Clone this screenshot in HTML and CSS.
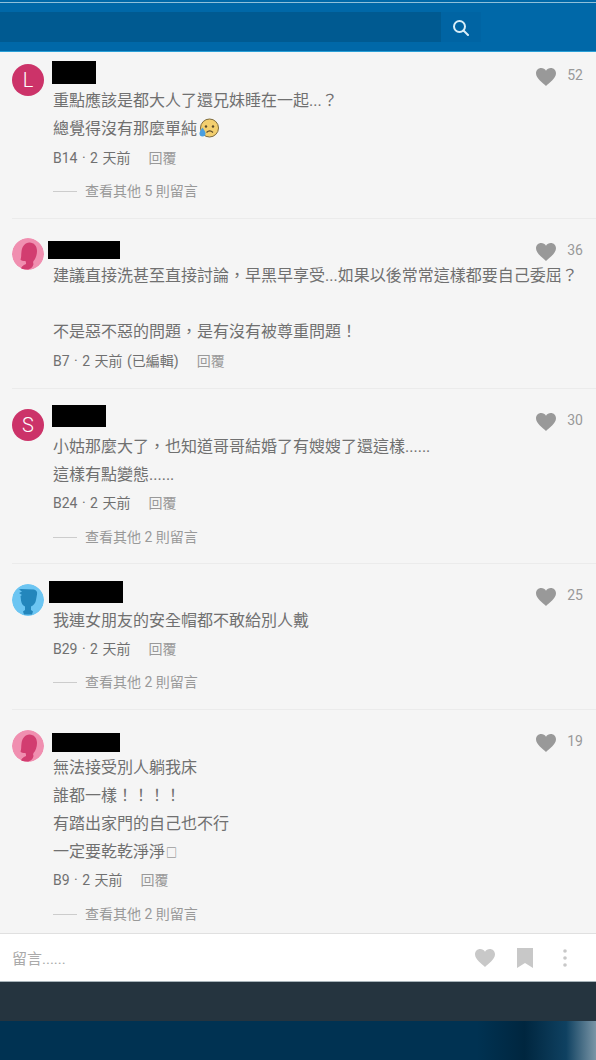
FILE: index.html
```html
<!DOCTYPE html>
<html lang="zh-Hant">
<head>
    <meta charset="UTF-8">
    <meta name="viewport" content="width=device-width, initial-scale=1.0">
    <title>留言</title>
    <link rel="stylesheet" href="styles.css">
</head>
<body>
    <svg class="defs" width="0" height="0">
        <symbol id="heart" viewBox="0 0 20 18">
            <path d="M10 18C7 15 0 10.500 0 5.300 0 2.200 2.300 0 5.200 0 7.200 0 9 1 10 2.700 11 1 12.800 0 14.800 0 17.700 0 20 2.200 20 5.300 20 10.500 13 15 10 18Z"/>
        </symbol>
        <symbol id="girl" viewBox="0 0 32 32">
            <circle cx="16" cy="16" r="16" fill="#f08fb0"/>
            <path fill="#d23d70" d="M9 31c0-2 2-4 5-5 0-1 0-2-.5-3-2.500 0-4.500-.5-5-1.500 1-2 .5-5 1-8 .5-5 3.500-9 8-9 4.500 0 7.500 3.500 7.500 8.500 0 4-1.500 8-3.500 10-.5 1-.5 2 0 3-.5 3-3 5.500-6.500 5.500-2.500 0-4.500 0-6-.5Z"/>
        </symbol>
        <symbol id="boy" viewBox="0 0 32 32">
            <circle cx="16" cy="16" r="16" fill="#6cc5f2"/>
            <path fill="#2386bc" d="M9 5l13 .5c2.500.5 3.500 2.500 3 5l-1 5.500c-.5 3-2.500 5.500-5 6.500v3.500l2 1.500-1 3h-8l-1-3 2-1.500v-3.500c-2.500-1-3.500-3-4-6l-.5-4.500 1.500-1-3-2 3-1.500-3-2Z"/>
        </symbol>
    </svg>

    <header class="topbar">
        <div class="search-box">
            <div class="search-btn">
                <svg width="18" height="18" viewBox="0 0 18 18" fill="none" stroke="#d8eef8" stroke-width="2">
                    <circle cx="7.500" cy="8.500" r="5.500"/>
                    <path d="M11.500 12.500l4.500 4.500" stroke-linecap="round"/>
                </svg>
            </div>
        </div>
    </header>

    <main class="comments">
        <section class="comment comment-first">
            <div class="avatar avatar-letter">L</div>
            <div class="comment-body">
                <div class="comment-head">
                    <div class="name name-1"></div>
                    <div class="likes"><svg class="like-icon"><use href="#heart"/></svg><span>52</span></div>
                </div>
                <p class="line">重點應該是都大人了還兄妹睡在一起...？</p>
                <p class="line">總覺得沒有那麼單純<svg class="emoji" viewBox="0 0 20 20">
                    <circle cx="10.500" cy="10" r="9" fill="#f3cf6f" stroke="#7d6a3a" stroke-width="1"/>
                    <circle cx="7" cy="8.500" r="1.200" fill="#5b4a2a"/>
                    <circle cx="14" cy="8.500" r="1.200" fill="#5b4a2a"/>
                    <path d="M7.500 14.500c2-2 4.500-2 6.500 0" fill="none" stroke="#5b4a2a" stroke-width="1.200"/>
                    <path d="M3.500 9.500c-2 3-3 4.500-3 6a3 3 0 0 0 6 0c0-1.500-1-3-3-6Z" fill="#4a9fe0"/>
                </svg></p>
                <div class="meta"><span>B14 · 2 天前</span><a class="reply">回覆</a></div>
                <div class="more"><i class="more-rule"></i>查看其他 5 則留言</div>
            </div>
        </section>

        <section class="comment">
            <svg class="avatar avatar-up"><use href="#girl"/></svg>
            <div class="comment-body">
                <div class="comment-head">
                    <div class="name name-2"></div>
                    <div class="likes"><svg class="like-icon"><use href="#heart"/></svg><span>36</span></div>
                </div>
                <p class="line">建議直接洗甚至直接討論，早黑早享受...如果以後常常這樣都要自己委屈？</p>
                <p class="line">&nbsp;</p>
                <p class="line">不是惡不惡的問題，是有沒有被尊重問題！</p>
                <div class="meta"><span>B7 · 2 天前 (已編輯)</span><a class="reply">回覆</a></div>
            </div>
        </section>

        <section class="comment comment-tall">
            <div class="avatar avatar-letter">S</div>
            <div class="comment-body">
                <div class="comment-head">
                    <div class="name name-3"></div>
                    <div class="likes"><svg class="like-icon"><use href="#heart"/></svg><span>30</span></div>
                </div>
                <p class="line">小姑那麼大了，也知道哥哥結婚了有嫂嫂了還這樣......</p>
                <p class="line">這樣有點變態......</p>
                <div class="meta"><span>B24 · 2 天前</span><a class="reply">回覆</a></div>
                <div class="more"><i class="more-rule"></i>查看其他 2 則留言</div>
            </div>
        </section>

        <section class="comment comment-tight">
            <svg class="avatar"><use href="#boy"/></svg>
            <div class="comment-body">
                <div class="comment-head">
                    <div class="name name-4"></div>
                    <div class="likes"><svg class="like-icon"><use href="#heart"/></svg><span>25</span></div>
                </div>
                <p class="line">我連女朋友的安全帽都不敢給別人戴</p>
                <div class="meta"><span>B29 · 2 天前</span><a class="reply">回覆</a></div>
                <div class="more"><i class="more-rule"></i>查看其他 2 則留言</div>
            </div>
        </section>

        <section class="comment comment-tall comment-last">
            <svg class="avatar"><use href="#girl"/></svg>
            <div class="comment-body">
                <div class="comment-head">
                    <div class="name name-5"></div>
                    <div class="likes"><svg class="like-icon"><use href="#heart"/></svg><span>19</span></div>
                </div>
                <p class="line">無法接受別人躺我床</p>
                <p class="line">誰都一樣！！！！</p>
                <p class="line">有踏出家門的自己也不行</p>
                <p class="line">一定要乾乾淨淨<span class="tofu">□</span></p>
                <div class="meta"><span>B9 · 2 天前</span><a class="reply">回覆</a></div>
                <div class="more"><i class="more-rule"></i>查看其他 2 則留言</div>
            </div>
        </section>
    </main>

    <div class="reply-bar">
        <span class="placeholder">留言......</span>
        <div class="reply-actions">
            <svg class="action-heart"><use href="#heart"/></svg>
            <svg class="action-mark" viewBox="0 0 16 20"><path d="M0 0h16v20l-8-5-8 5Z"/></svg>
            <svg class="action-dots" viewBox="0 0 4 18"><circle cx="2" cy="2" r="1.800"/><circle cx="2" cy="9" r="1.800"/><circle cx="2" cy="16" r="1.800"/></svg>
        </div>
    </div>
    <div class="footer-dark"></div>
    <div class="footer-navy"></div>
</body>
</html>
```

FILE: styles.css
```css
html, body {
    margin: 0;
    height: 1060px;
    overflow: hidden;
}
body {
    font-family: Roboto, "Noto Sans CJK TC", sans-serif;
    background-color: #f5f5f5;
    color: #707070;
}
.defs {
    display: block;
    height: 0;
}
.topbar {
    height: 52px;
    padding-top: 12px;
    box-sizing: border-box;
    background: linear-gradient(to bottom, #0068a8 2px, #8fc0da 2px, #8fc0da 3px, #0068a8 3px);
    border-bottom: 1px solid #2a9fd6;
}
.search-box {
    width: 481px;
    height: 30px;
    background-color: #005a91;
    display: flex;
    justify-content: flex-end;
}
.search-btn {
    width: 40px;
    height: 30px;
    background-color: #0064a3;
    display: flex;
    align-items: center;
    justify-content: center;
}
.comment {
    display: flex;
    margin-left: 12px;
    padding: 20px 13px 13px 0;
    border-bottom: 1px solid #ebebeb;
}
.comment-first {
    padding-top: 12px;
}
.comment-last {
    border-bottom: none;
}
.avatar {
    flex: none;
    width: 32px;
    height: 32px;
    border-radius: 50%;
}
.avatar-up {
    margin-top: -1px;
}
.avatar-letter {
    background-color: #cc3369;
    color: #fff;
    font-size: 20px;
    font-weight: 300;
    line-height: 32px;
    text-align: center;
}
.comment-body {
    flex: 1;
    margin-left: 9px;
    min-width: 0;
}
.comment-head {
    display: flex;
    justify-content: space-between;
    height: 23px;
}
.comment-tall .comment-head {
    height: 24px;
}
.name {
    background-color: #000;
    flex: none;
}
.name-1 {
    width: 44px;
    height: 23px;
    margin: -3px 0 0 -1px;
}
.name-2 {
    width: 72px;
    height: 18px;
    margin: 2px 0 0 -5px;
}
.name-3 {
    width: 54px;
    height: 22px;
    margin: -4px 0 0 -1px;
}
.name-4 {
    width: 74px;
    height: 22px;
    margin: -3px 0 0 -4px;
}
.name-5 {
    width: 68px;
    height: 19px;
    margin: 3px 0 0 -1px;
}
.likes {
    display: flex;
    align-items: flex-start;
    font-size: 14px;
    line-height: 22px;
    color: #999;
}
.like-icon {
    width: 20px;
    height: 18px;
    fill: #999;
    margin: 4px 11px 0 0;
}
.line {
    margin: 0;
    font-size: 16px;
    line-height: 28px;
    white-space: nowrap;
}
.emoji {
    width: 20px;
    height: 20px;
    margin-left: 2px;
    vertical-align: -4px;
}
.tofu {
    font-size: 11px;
    line-height: 1;
    margin-left: 1px;
}
.meta {
    margin-top: 1px;
    font-size: 14px;
    line-height: 28px;
    word-spacing: 1px;
    color: #707070;
}
.comment-tall .meta,
.comment-tight .meta {
    margin-top: 0;
}
.reply {
    margin-left: 18px;
    color: #999;
}
.more {
    display: flex;
    align-items: center;
    margin-top: 5px;
    font-size: 14px;
    line-height: 28px;
    color: #999;
}
.comment-tall .more {
    margin-top: 6px;
    margin-bottom: -1px;
}
.comment-last {
    padding-bottom: 6px;
}
.more-rule {
    width: 24px;
    height: 1px;
    background-color: #ccc;
    margin-right: 8px;
}
.reply-bar {
    height: 49px;
    box-sizing: border-box;
    display: flex;
    align-items: center;
    justify-content: space-between;
    padding: 0 29px 0 12px;
    background-color: #fff;
    border-top: 1px solid #e0e0e0;
    border-bottom: 1px solid #a8b4ba;
}
.placeholder {
    font-size: 15px;
    color: #aaa;
}
.reply-actions {
    display: flex;
    align-items: center;
}
.action-heart {
    width: 20px;
    height: 18px;
    fill: #c8c8c8;
}
.action-mark {
    width: 16px;
    height: 20px;
    fill: #c8c8c8;
    margin-left: 22px;
}
.action-dots {
    width: 4px;
    height: 18px;
    fill: #c8c8c8;
    margin-left: 30px;
}
.footer-dark {
    height: 39px;
    background-color: #25343f;
}
.footer-navy {
    height: 39px;
    background: linear-gradient(to right, #003252 80%, #00263f 88%, #0f4161 95%, #7a95a6 100%);
}
```
